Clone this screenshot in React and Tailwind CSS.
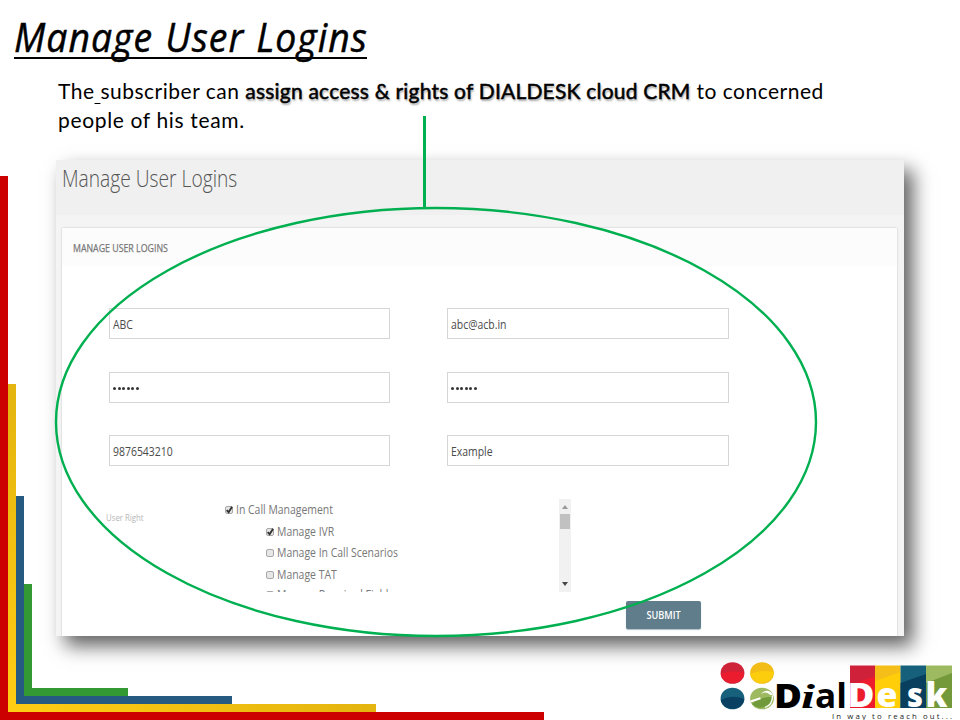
import React from "react";

function CornerFrame() {
  return (
    <div className="absolute bottom-0 left-0 flex h-[544px] w-[544px] items-end border-b-8 border-l-8 border-[#cc0000]">
      <div className="flex h-[328px] w-[368px] flex-col">
        <div className="flex min-h-0 flex-1 items-end">
          <div className="h-full w-2 shrink-0 bg-linear-to-b from-[#e3b40f] to-[#ffcc14]" />
          <div className="flex h-[208px] w-[216px] items-end border-b-8 border-l-8 border-[#265a80]">
            <div className="h-[112px] w-[104px] border-b-8 border-l-8 border-[#339933]" />
          </div>
        </div>
        <div className="h-2 w-full shrink-0 bg-linear-to-r from-[#ffcc14] to-[#e3b40f]" />
      </div>
    </div>
  );
}

function Field({ children, dots }) {
  return (
    <div className="flex h-[31px] items-center border border-[#d6d6d6] bg-white pt-[2px] pl-[3px] text-[#4a4a4a]">
      {dots ? (
        <div className="flex gap-[1.5px]">
          {[0, 1, 2, 3, 4, 5].map((i) => (
            <span key={i} className="size-[3px] rounded-full bg-[#333]" />
          ))}
        </div>
      ) : (
        <span className="origin-left scale-x-[0.87] text-[12px] leading-none whitespace-nowrap">{children}</span>
      )}
    </div>
  );
}

function Check({ checked }) {
  return (
    <span className="block size-[8px] shrink-0 rounded-[2px] border border-[#a8a8a8] bg-[#e6e6e6]">
      {checked && (
        <svg viewBox="0 0 8 8" className="-mt-[2px] -ml-px block size-[9px] max-w-none" fill="none" stroke="#333" strokeWidth="1.7">
          <path d="M1.5 4.6 3.2 6.4 6.3 1.6" />
        </svg>
      )}
    </span>
  );
}

function Right({ checked, nested, children }) {
  return (
    <div className={nested ? "flex h-[21.7px] shrink-0 items-center gap-[3px] pl-[41px] last:-mt-[2px]" : "flex h-[21.7px] shrink-0 items-center gap-[3px]"}>
      <Check checked={checked} />
      <span className="origin-left scale-x-[0.87] text-[12px] leading-none whitespace-nowrap">{children}</span>
    </div>
  );
}

function Logo() {
  return (
    <svg viewBox="0 0 240 62" className="absolute top-[661px] left-[718px] h-[62px] w-[240px]">
      <ellipse cx="14.500" cy="12" rx="11.900" ry="10.800" fill="#cf2338" />
      <path d="M2.700 13Q14 8 26.300 12A11.900 10.800 0 0 1 2.700 13Z" fill="#ea1c2e" />
      <ellipse cx="44" cy="12" rx="11.900" ry="10.800" fill="#f3bd18" />
      <path d="M32.200 13Q43 8 55.800 11A11.900 10.800 0 0 1 32.200 13Z" fill="#fccd0c" />
      <ellipse cx="14.500" cy="37.500" rx="11.900" ry="10.800" fill="#17617d" />
      <path d="M2.700 39Q14 33 26.300 38A11.900 10.800 0 0 1 2.700 39Z" fill="#0a4162" />
      <ellipse cx="44" cy="37.500" rx="11.900" ry="10.800" fill="#9dba60" />
      <path d="M34 43Q41 36 54 36A11.500 10.800 0 0 1 34 43Z" fill="#719a3b" />
      <path d="M32.500 40.500 42.500 37.300" stroke="#fff" strokeWidth="2.200" />
      <path d="M43 33Q50 25.500 56 35L51.500 33.500Q48 30 43 33Z" fill="#fff" />
      <path d="M47 46.500Q54.500 44 54.500 35" fill="none" stroke="#fff" strokeWidth="1.300" />

      <path d="M132 4.500h25v42.500h-25z" fill="#d0213b" />
      <path d="M132 24 157 15v32h-25z" fill="#ed1b2e" />
      <path d="M157 4.500h25.500v42.500H157z" fill="#f5be19" />
      <path d="M157 20 182.500 11v36H157z" fill="#ffce08" />
      <path d="M182.500 4.500H208v42.500h-25.500z" fill="#17607b" />
      <path d="M182.500 22 208 13v34h-25.500z" fill="#083f5f" />
      <path d="M208 4.500h26v42.500h-26z" fill="#9eba61" />
      <path d="M208 22 234 12v35h-26z" fill="#73993b" />

      <g fontFamily="'Open Sans', 'Noto Sans', sans-serif" fontWeight="800" fontSize="34">
        <text x="56" y="46.500" textLength="28" lengthAdjust="spacingAndGlyphs">D</text>
        <text x="83" y="46.500" fontFamily="'Liberation Serif', serif" fontStyle="italic" fontWeight="700" textLength="14" lengthAdjust="spacingAndGlyphs">i</text>
        <text x="97" y="46.500" fontWeight="700" textLength="32" lengthAdjust="spacingAndGlyphs">al</text>
        <g fill="#fff">
          <text x="129.500" y="46" textLength="27" lengthAdjust="spacingAndGlyphs">D</text>
          <text x="158.500" y="46" textLength="21" lengthAdjust="spacingAndGlyphs">e</text>
          <text x="189" y="46" textLength="16" lengthAdjust="spacingAndGlyphs">s</text>
          <text x="207.500" y="46" textLength="22" lengthAdjust="spacingAndGlyphs">k</text>
        </g>
      </g>
      <text x="114" y="57.500" fontFamily="'Open Sans', 'Noto Sans', sans-serif" fontSize="7.800" textLength="120" fill="#222">In way to reach out...</text>
    </svg>
  );
}

export default function App() {
  return (
    <main className="relative h-[720px] w-[960px] overflow-hidden bg-white font-['Open_Sans','Noto_Sans',sans-serif]">
      <CornerFrame />
      <h1 className="ml-[14px] flex h-[59px] w-[353px] items-end border-b-2 border-black text-[39.500px] leading-[50px] text-black italic">
        <span className="mb-[-5px] origin-left scale-x-[0.945] tracking-[1.1px] [word-spacing:1.5px] whitespace-nowrap [-webkit-text-stroke:0.5px_black]">Manage User Logins</span>
      </h1>
      <p className="mt-[17px] ml-[58px] w-[800px] font-[Lato,'Open_Sans',sans-serif] text-[21px] leading-[29px] tracking-[0.5px] text-black">
        The<u className="decoration-1 underline-offset-4"> </u>subscriber can{" "}
        <span className="tracking-[0.21px] text-shadow-[1px_2px_2px_rgba(0,0,0,0.35)] [-webkit-text-stroke:0.5px_black]">assign access &amp; rights of DIALDESK cloud CRM</span> to concerned
        <br />
        <span className="tracking-[0.65px]">people of his team.</span>
      </p>

      <section className="relative mt-[26px] ml-[56px] flex h-[476px] w-[848px] flex-col bg-[#f4f4f4] shadow-[9px_10px_18px_rgba(0,0,0,0.62)]">
        <header className="h-[55px] shrink-0 bg-[#f0f0f0] pl-[6px] text-[#555]">
          <h2 className="origin-left scale-x-[0.835] pt-[2px] text-[23px] leading-[32px] font-light whitespace-nowrap">Manage User Logins</h2>
        </header>
        <div className="mt-[13px] mr-[7px] ml-[6px] flex min-h-0 flex-1 flex-col bg-white shadow-[0_0_2px_rgba(0,0,0,0.2)] [clip-path:inset(-3px_-3px_0)]">
          <div className="flex h-[38px] shrink-0 items-center bg-[#fcfcfc] pt-px pl-[11px]">
            <h3 className="origin-left scale-x-[0.8] text-[11px] leading-none whitespace-nowrap text-[#777] [-webkit-text-stroke:0.25px_#777]">MANAGE USER LOGINS</h3>
          </div>
          <div className="mt-[42px] ml-[47px] grid grid-cols-[281px_282px] gap-x-[57px] gap-y-[32.500px]">
            <Field>ABC</Field>
            <Field>abc@acb.in</Field>
            <Field dots />
            <Field dots />
            <Field>9876543210</Field>
            <Field>Example</Field>
          </div>
          <div className="mt-[33px] ml-[44px] flex h-[93px] shrink-0">
            <div className="w-[119px] shrink-0 pt-[13px]">
              <span className="block origin-left scale-x-[0.82] text-[9.500px] leading-[12px] whitespace-nowrap text-[#b5b5b5]">User Right</span>
            </div>
            <div className="flex w-[334px] flex-col overflow-hidden text-[#777]">
              <Right checked>In Call Management</Right>
              <Right checked nested>Manage IVR</Right>
              <Right nested>Manage In Call Scenarios</Right>
              <Right nested>Manage TAT</Right>
              <Right nested>Manage Required Fields</Right>
            </div>
            <div className="flex w-[12px] flex-col items-center bg-[#f1f1f1] pt-[6px] pb-[6px]">
              <svg viewBox="0 0 6 4" className="h-[4px] w-[6px]"><path d="M3 0 6 4H0Z" fill="#999" /></svg>
              <div className="mt-[5px] h-[15px] w-[10px] bg-[#c1c1c1]" />
              <svg viewBox="0 0 6 4" className="mt-auto h-[4px] w-[6px]"><path d="M0 0H6L3 4Z" fill="#444" /></svg>
            </div>
          </div>
          <button className="mt-[9px] ml-[564px] flex h-[28px] w-[75px] shrink-0 items-center justify-center rounded-[2px] bg-[#607d8b] text-[11px] font-semibold text-white shadow-[0_1px_1px_rgba(96,125,139,0.5)]">
            <span className="scale-x-[0.83]">SUBMIT</span>
          </button>
        </div>
      </section>

      <svg viewBox="0 0 960 720" className="pointer-events-none absolute inset-0 size-full" fill="none" stroke="#00b050">
        <ellipse cx="436" cy="422" rx="380" ry="214" strokeWidth="2.400" />
        <path d="M424.500 116V208" strokeWidth="3" />
      </svg>
      <Logo />
    </main>
  );
}
